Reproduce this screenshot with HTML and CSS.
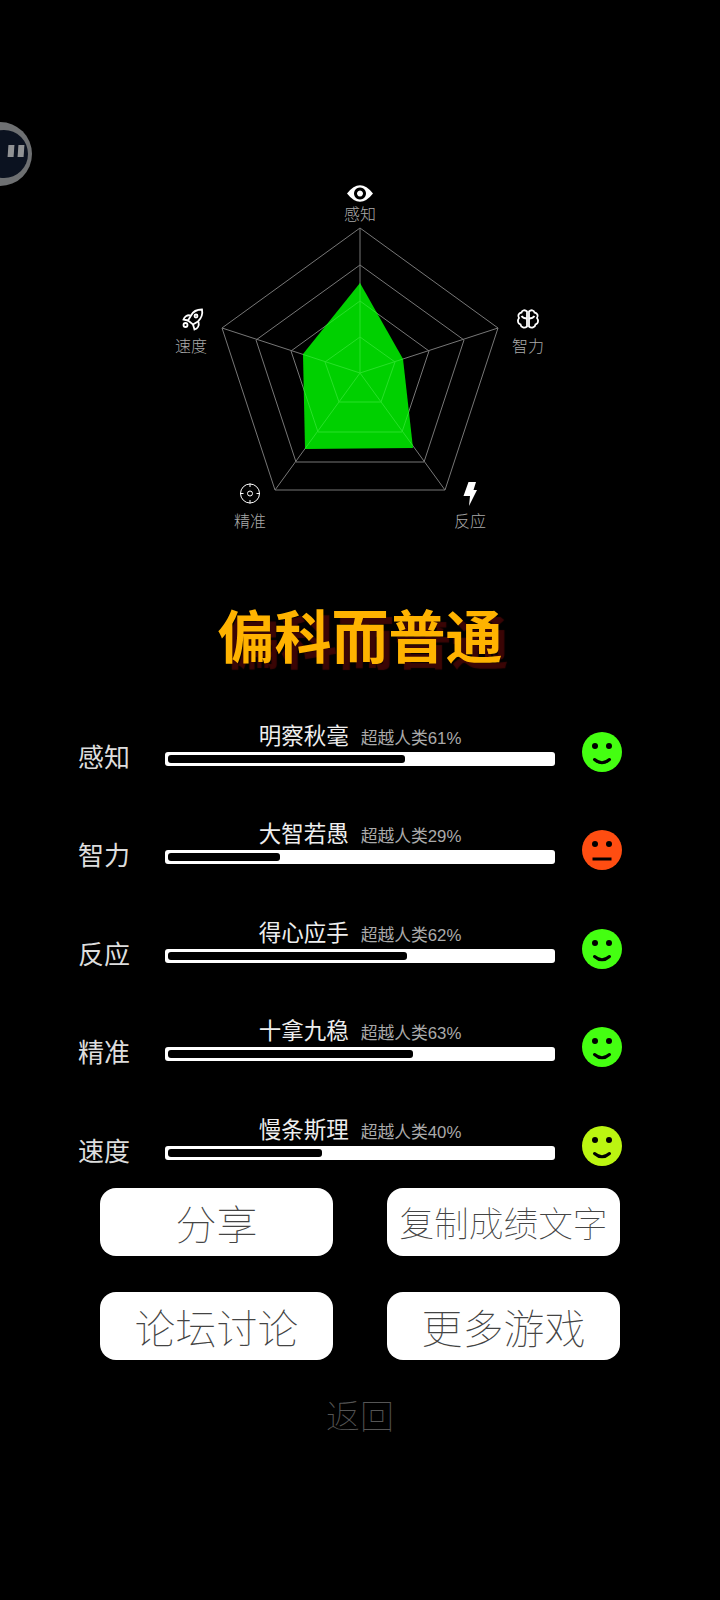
FILE: index.html
```html
<!DOCTYPE html>
<html lang="zh">
<head>
    <meta charset="UTF-8">
    <meta name="viewport" content="width=device-width, initial-scale=1.0">
    <title>偏科而普通</title>
    <link rel="stylesheet" href="styles.css">
</head>
<body>
    <!-- floating assistant ball -->
    <div class="ball"><span class="ball-face"><i></i><i></i></span></div>

    <div class="page">
        <svg class="radar" viewBox="0 0 720 390" width="720" height="390">
            <defs>
                <clipPath id="score-clip"><polygon points="360,113 403,189 413,278 305,279 303,184"/></clipPath>
            </defs>
            <g class="web">
                <polygon points="360,58 498,158 445,320 275,320 222,158"/>
                <polygon points="360,95 464,170 424,292 296,292 256,170"/>
                <polygon points="360,131 429,181 402,262 318,262 291,181"/>
                <polygon points="360,167 395,192 381,232 339,232 325,192"/>
                <path d="M360 203V58M360 203L498 158M360 203L445 320M360 203L275 320M360 203L222 158"/>
            </g>
            <polygon class="score" points="360,113 403,189 413,278 305,279 303,184"/>
            <g class="web-over" clip-path="url(#score-clip)">
                <polygon points="360,95 464,170 424,292 296,292 256,170"/>
                <polygon points="360,131 429,181 402,262 318,262 291,181"/>
                <polygon points="360,167 395,192 381,232 339,232 325,192"/>
                <path d="M360 203V58M360 203L498 158M360 203L445 320M360 203L275 320M360 203L222 158"/>
            </g>

            <!-- eye -->
            <path class="icon-fill" fill-rule="evenodd" d="M347 23.500Q360 7 373 23.500Q360 40 347 23.500ZM360 17.500a6 6 0 1 0 .01 0ZM360 20.500a3 3 0 1 0 .01 0Z"/>
            <text class="axis" x="360" y="50">感知</text>

            <!-- brain -->
            <g class="icon-line">
                <path d="M527 141.500c-2-2-5-1.500-5.500 1c-3 .5-4 3.500-2.500 5.500c-2 2.500-1 6 1.500 6.500c.5 3 4 4 6.500 2z"/>
                <path d="M529 141.500c2-2 5-1.500 5.500 1c3 .5 4 3.500 2.500 5.500c2 2.500 1 6-1.500 6.500c-.5 3-4 4-6.500 2z"/>
                <path d="M521.500 146c1 1.500 2.500 2.500 5.500 2.500M534.500 146c-1 1.500-2.500 2.500-5.500 2.500"/>
            </g>
            <text class="axis" x="528" y="182">智力</text>

            <!-- bolt -->
            <path class="icon-fill" d="M468.500 312L476 312L473.500 320L477 320L469 336L470 326L463.500 326Z"/>
            <text class="axis" x="470" y="357">反应</text>

            <!-- target -->
            <g class="icon-line thin">
                <circle cx="250" cy="323.500" r="9.500"/>
                <circle cx="250" cy="323.500" r="2.500"/>
                <path d="M250 313.500v3.500M250 330v3.500M240 323.500h3.500M256.500 323.500h3.500"/>
            </g>
            <text class="axis" x="250" y="357">精准</text>

            <!-- rocket -->
            <g class="icon-line">
                <path d="M202 139.500c-5 0-9 2-11 6l-3 5l5 4l5-3c3-3 5-7 4-12z"/>
                <path d="M188 150.500l-4.500 -1c1-3 4-5 7-4M193 154.500l1.500 5c3-1 5-4 4-7.500"/>
                <circle cx="196" cy="146" r="1.500"/>
                <circle cx="185.500" cy="155" r="2"/>
            </g>
            <text class="axis" x="191" y="182">速度</text>
        </svg>

        <h1 class="verdict">偏科而普通</h1>

        <div class="stats">
            <div class="stat">
                <div class="stat-name">感知</div>
                <div class="stat-main">
                    <div class="stat-text"><b>明察秋毫</b><span>超越人类61%</span></div>
                    <div class="bar"><div class="bar-fill" style="width: 61.7%"></div></div>
                </div>
                <svg class="face" viewBox="0 0 40 40"><circle cx="20" cy="20" r="20" fill="#44ff11"/><circle cx="13" cy="14" r="3"/><circle cx="27" cy="14" r="3"/><path class="smile" d="M12.500 27.500q7.500 6.500 15 0"/></svg>
            </div>
            <div class="stat">
                <div class="stat-name">智力</div>
                <div class="stat-main">
                    <div class="stat-text"><b>大智若愚</b><span>超越人类29%</span></div>
                    <div class="bar"><div class="bar-fill" style="width: 29.2%"></div></div>
                </div>
                <svg class="face" viewBox="0 0 40 40"><circle cx="20" cy="20" r="20" fill="#ff4d11"/><circle cx="13" cy="14" r="3"/><circle cx="27" cy="14" r="3"/><path class="smile flat" d="M10.500 29h19"/></svg>
            </div>
            <div class="stat">
                <div class="stat-name">反应</div>
                <div class="stat-main">
                    <div class="stat-text"><b>得心应手</b><span>超越人类62%</span></div>
                    <div class="bar"><div class="bar-fill" style="width: 62.2%"></div></div>
                </div>
                <svg class="face" viewBox="0 0 40 40"><circle cx="20" cy="20" r="20" fill="#44ff11"/><circle cx="13" cy="14" r="3"/><circle cx="27" cy="14" r="3"/><path class="smile" d="M12.500 27.500q7.500 6.500 15 0"/></svg>
            </div>
            <div class="stat">
                <div class="stat-name">精准</div>
                <div class="stat-main">
                    <div class="stat-text"><b>十拿九稳</b><span>超越人类63%</span></div>
                    <div class="bar"><div class="bar-fill" style="width: 63.8%"></div></div>
                </div>
                <svg class="face" viewBox="0 0 40 40"><circle cx="20" cy="20" r="20" fill="#44ff11"/><circle cx="13" cy="14" r="3"/><circle cx="27" cy="14" r="3"/><path class="smile" d="M12.500 27.500q7.500 6.500 15 0"/></svg>
            </div>
            <div class="stat">
                <div class="stat-name">速度</div>
                <div class="stat-main">
                    <div class="stat-text"><b>慢条斯理</b><span>超越人类40%</span></div>
                    <div class="bar"><div class="bar-fill" style="width: 40.1%"></div></div>
                </div>
                <svg class="face" viewBox="0 0 40 40"><circle cx="20" cy="20" r="20" fill="#bbf511"/><circle cx="13" cy="14" r="3"/><circle cx="27" cy="14" r="3"/><path class="smile" d="M12.500 27.500q7.500 6.500 15 0"/></svg>
            </div>
        </div>

        <div class="actions">
            <button class="btn">分享</button>
            <button class="btn btn-long">复制成绩文字</button>
            <button class="btn">论坛讨论</button>
            <button class="btn">更多游戏</button>
        </div>

        <div class="back">返回</div>
    </div>
</body>
</html>
```

FILE: styles.css
```css
* {
    box-sizing: border-box;
    margin: 0;
    padding: 0;
    font-family: 'Noto Sans CJK SC', 'Noto Sans', sans-serif;
}

body {
    background-color: #000;
    color: #fff;
    width: 720px;
    height: 1600px;
    overflow: hidden;
}

.page {
    padding-top: 170px;
}

.ball {
    position: absolute;
    left: -32px;
    top: 122px;
    width: 64px;
    height: 64px;
    border-radius: 50%;
    background-color: #6e7072;
}

.ball-face {
    position: absolute;
    left: 12px;
    top: 8px;
    width: 48px;
    height: 48px;
    border-radius: 50%;
    background-color: #0b1220;
}

.ball-face i {
    position: absolute;
    top: 15px;
    width: 5.500px;
    height: 12px;
    background-color: #909294;
    transform: skewX(-4deg);
}

.ball-face i:first-child {
    left: 27.500px;
}

.ball-face i:last-child {
    left: 37.500px;
}

.radar {
    display: block;
}

.web polygon, .web path {
    fill: none;
    stroke: #777;
    stroke-width: 1;
}

.web-over polygon, .web-over path {
    fill: none;
    stroke: #28e028;
    stroke-width: 1;
}

.score {
    fill: #00d000;
}

.axis {
    fill: #aaa;
    font-size: 16px;
    font-weight: 200;
    text-anchor: middle;
}

.icon-fill {
    fill: #fff;
}

.icon-line {
    fill: none;
    stroke: #fff;
    stroke-width: 1.800;
}

.icon-line.thin {
    stroke-width: 1;
}

.verdict {
    margin-top: 33px;
    height: 80px;
    line-height: 80px;
    text-align: center;
    font-size: 57px;
    font-weight: 700;
    color: #ffb300;
    text-shadow: 6px 6px 1px #3a0505;
}

.stats {
    padding-left: 78px;
}

.stat {
    display: flex;
    align-items: flex-end;
    height: 98.500px;
}

.stat-name {
    width: 87px;
    font-size: 26px;
    line-height: 33px;
    color: #ddd;
}

.stat-main {
    width: 390px;
}

.stat-text {
    display: flex;
    justify-content: center;
    align-items: baseline;
    gap: 12px;
    line-height: 26px;
}

.stat-text b {
    font-size: 22.500px;
    font-weight: 400;
    color: #eee;
}

.stat-text span {
    font-family: 'Liberation Sans', 'Noto Sans CJK SC', sans-serif;
    font-size: 16.800px;
    color: #aaa;
}

.bar {
    height: 14px;
    padding: 3px;
    background-color: #fff;
    border-radius: 3px;
    margin-bottom: 6px;
}

.bar-fill {
    height: 8px;
    background-color: #000;
    border-radius: 3px;
}

.face {
    width: 40px;
    height: 40px;
    margin-left: 27px;
    fill: #000;
}

.smile {
    fill: none;
    stroke: #000;
    stroke-width: 3;
    stroke-linecap: round;
}

.smile.flat {
    stroke-linecap: butt;
}

.actions {
    display: grid;
    grid-template-columns: 233px 233px;
    column-gap: 54px;
    row-gap: 36px;
    margin-top: 22px;
    padding-left: 100px;
}

.btn {
    height: 68px;
    background-color: #fff;
    border: none;
    border-radius: 16px;
    color: #444;
    font-size: 41px;
    font-weight: 100;
}

.btn-long {
    font-size: 34.700px;
}

.back {
    margin-top: 30px;
    text-align: center;
    font-size: 34px;
    line-height: 50px;
    font-weight: 100;
    color: #555;
}
```
